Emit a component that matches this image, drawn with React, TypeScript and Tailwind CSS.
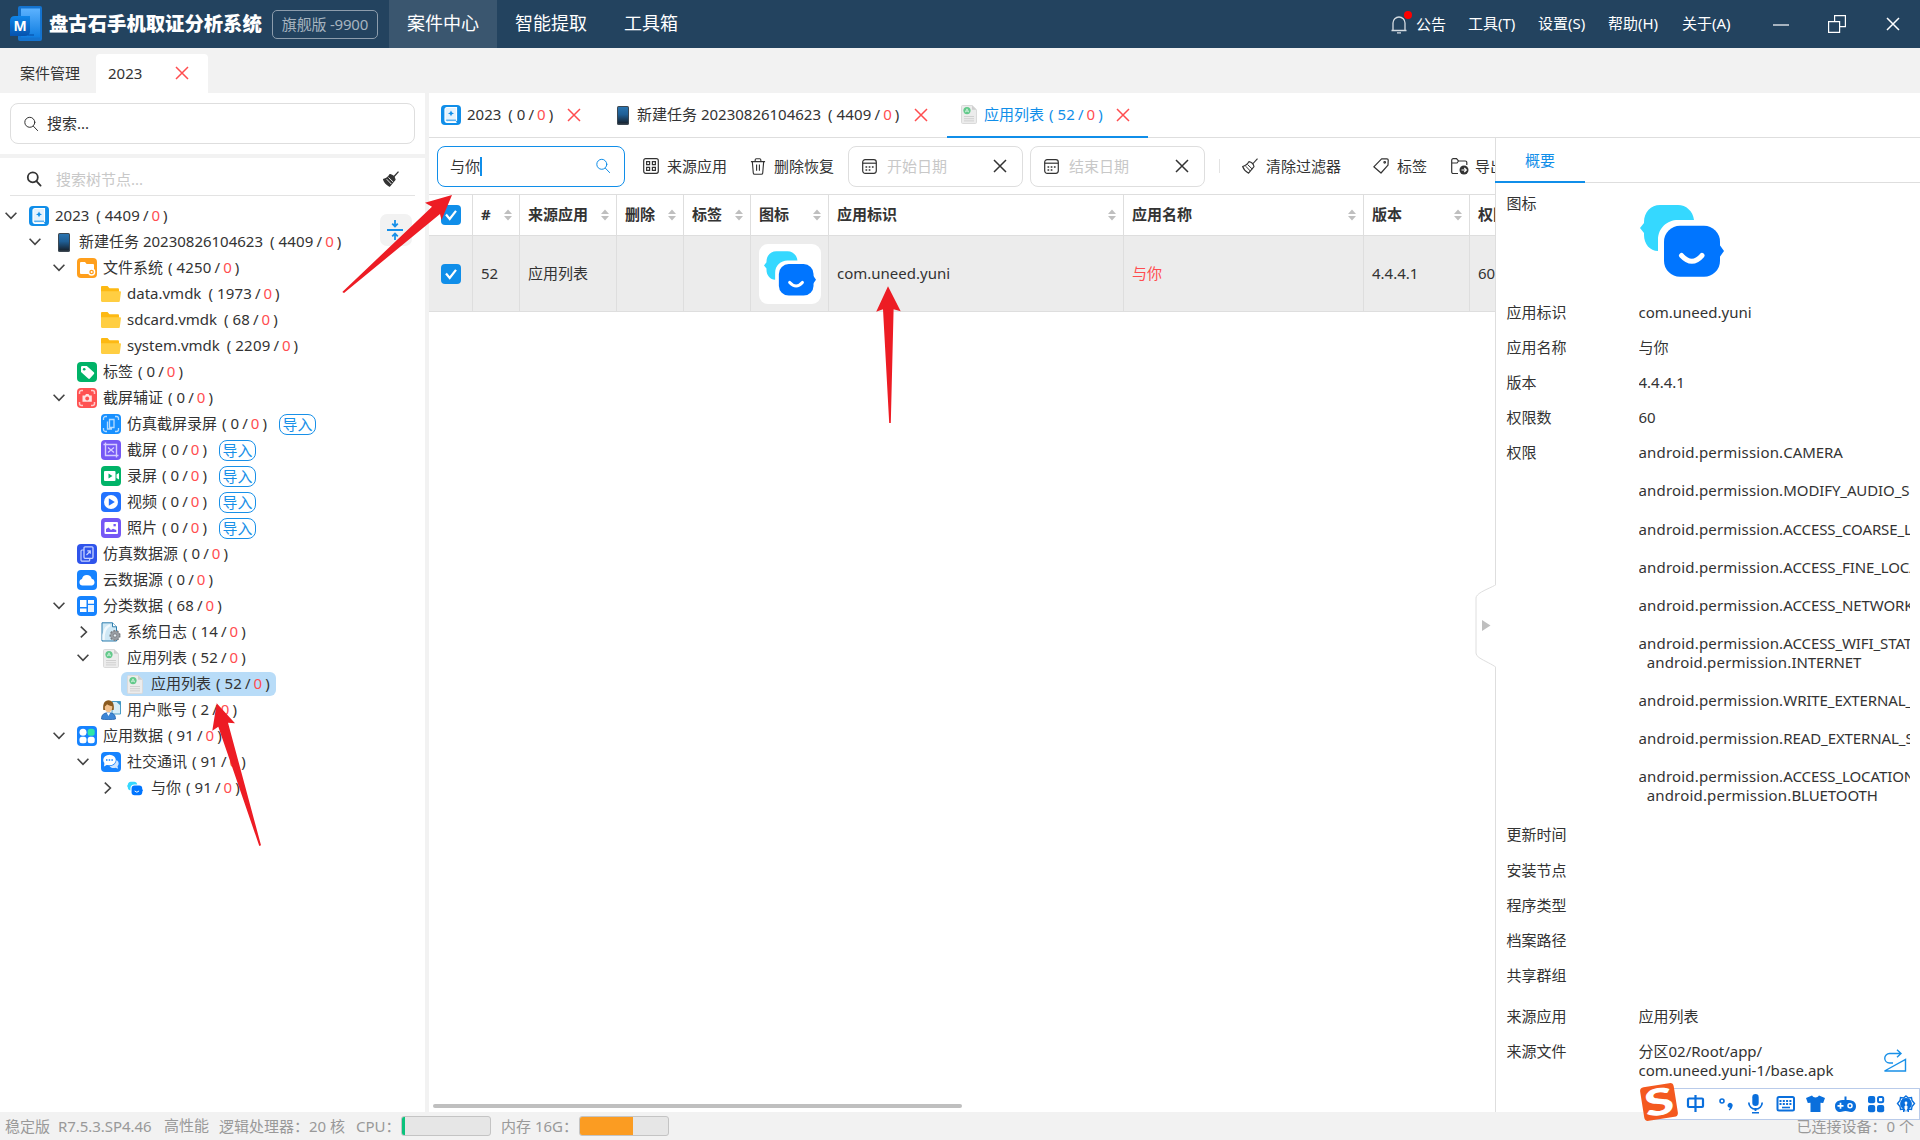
import React from "react";

type P = { className?: string };

/* ---------- shared drawings ---------- */

const Close = ({ className = "" }: P) => (
  <svg viewBox="0 0 14 14" className={`h-[14px] w-[14px] shrink-0 ${className}`} fill="none" stroke="currentColor" strokeWidth="1.5">
    <path d="M1 1l12 12M13 1L1 13" />
  </svg>
);

const Magnifier = ({ className = "" }: P) => (
  <svg viewBox="0 0 16 16" className={`h-4 w-4 shrink-0 ${className}`} fill="none" stroke="currentColor" strokeLinecap="round">
    <circle cx="6.8" cy="6.3" r="5" />
    <path d="M10.4 10.2l4.2 4.4" />
  </svg>
);

const YuniIcon = ({ className = "" }: P) => (
  <svg viewBox="0 0 84 72" className={`shrink-0 ${className}`}>
    <path d="M54 15C53 6 46 0 38 0H20C11 0 4 7 4 17v1l-4 5 4 5v2c0 9 6 16 14 16V35c0-12 9-20 20-20z" fill="#35d8ff" />
    <rect x="24" y="20.7" width="56" height="51" rx="16" fill="#0075ff" />
    <path d="M79 39l5 7-5 7z" fill="#0075ff" />
    <path d="M41.5 50.5Q52 62 62 50.5" fill="none" stroke="#fff" strokeWidth="5" strokeLinecap="round" />
  </svg>
);

const CaseIcon = ({ className = "h-5 w-5" }: P) => (
  <svg viewBox="0 0 20 20" className={`shrink-0 ${className}`}>
    <rect width="20" height="20" rx="4" fill="#108ee9" />
    <path d="M6 2.5h9.5v13H6.300a1.200 1.200 0 0 0 0 2M15.500 17.300H6a2 2 0 0 1-2-2V4.500a2 2 0 0 1 2-2" fill="#e4f2fd" stroke="#fff" strokeWidth="1.200" />
    <path d="M10 5.500l1 2 2 .9-2 .9-1 2-1-2-2-.9 2-.9z" fill="#108ee9" />
    <path d="M5.200 15.200h10" stroke="#108ee9" />
  </svg>
);

const PhoneIcon = ({ className = "" }: P) => (
  <svg viewBox="0 0 12 19" className={`h-[19px] w-3 shrink-0 ${className}`}>
    <defs>
      <linearGradient id="ph" x1="0" y1="0" x2="0" y2="1">
        <stop offset="0" stopColor="#2a74b0" />
        <stop offset=".45" stopColor="#1f5f96" />
        <stop offset="1" stopColor="#16222f" />
      </linearGradient>
    </defs>
    <rect width="12" height="19" rx="1.6" fill="#3b4752" />
    <rect x="1" y="1" width="10" height="16.5" rx=".8" fill="url(#ph)" />
  </svg>
);

const DocIcon = ({ className = "" }: P) => (
  <svg viewBox="0 0 16 19" className={`h-[19px] w-4 shrink-0 ${className}`}>
    <path d="M1.5.5h9.7l4.3 4.2v12.6a1.2 1.2 0 0 1-1.2 1.2H1.7a1.2 1.2 0 0 1-1.2-1.2V1.5a1 1 0 0 1 1-1z" fill="#ececec" stroke="#dadada" />
    <path d="M11 .5v4.3h4.5z" fill="#cfcfcf" />
    <circle cx="6" cy="5.6" r="3.6" fill="#62c98a" />
    <path d="M4.3 7.3L6 3.8l1.7 3.5M4.5 6.2h3" stroke="#d8f3e2" strokeWidth=".8" fill="none" />
    <path d="M3 11.5h10M3 13.7h10M3 15.9h10" stroke="#d0d0d0" />
  </svg>
);

const Tile = ({ color, children }: { color: string; children: React.ReactNode }) => (
  <svg viewBox="0 0 20 20" className="h-5 w-5 shrink-0">
    <rect width="20" height="20" rx="4" fill={color} />
    {children}
  </svg>
);

const icons: Record<string, React.ReactNode> = {
  case: <CaseIcon />,
  phone: <PhoneIcon className="ml-[5px] mr-[3px]" />,
  fs: (
    <Tile color="#ff9f1c">
      <path d="M3 5a1 1 0 0 1 1-1h4l1.6 2H16a1 1 0 0 1 1 1v8a1 1 0 0 1-1 1H4a1 1 0 0 1-1-1z" fill="#fff" />
      <circle cx="14.6" cy="14" r="3" fill="#ff9f1c" stroke="#fff" strokeWidth="1.4" />
      <circle cx="14.6" cy="14" r="1" fill="#fff" />
    </Tile>
  ),
  folder: (
    <svg viewBox="0 0 20 20" className="h-5 w-5 shrink-0">
      <path d="M0 3.2C0 2.5.5 2 1.2 2h5.3l2 2.2h8.3c.7 0 1.2.5 1.2 1.2V16H0z" fill="#fdb913" />
      <path d="M0 7.2h19.2c.6 0 .9.4.8.9l-1.2 8.8c-.1.6-.5 1.1-1.2 1.1H1.2C.5 18 0 17.500 0 16.800z" fill="#ffce42" />
    </svg>
  ),
  tag: (
    <Tile color="#00b368">
      <path d="M4 5.200A1.200 1.200 0 0 1 5.200 4h4.600l7 6.200c.6.5.6 1.200.1 1.700l-4 4.600c-.5.5-1.200.5-1.700 0L4 10z" fill="#fff" />
      <circle cx="7.200" cy="7.200" r="1.300" fill="#00b368" />
    </Tile>
  ),
  shot: (
    <Tile color="#ff5252">
      <path d="M2.500 6V4.500a2 2 0 0 1 2-2H6M14 2.500h1.500a2 2 0 0 1 2 2V6M17.500 14v1.500a2 2 0 0 1-2 2H14M6 17.500H4.500a2 2 0 0 1-2-2V14" fill="none" stroke="#ffc9c9" strokeWidth="1.500" />
      <path d="M5.500 7.500H8L9 6h2.500l1 1.500h2.300v6.300H5.500z" fill="#ffe3e3" />
      <circle cx="10.200" cy="10.500" r="1.900" fill="#ff5252" />
    </Tile>
  ),
  simshot: (
    <Tile color="#1890ff">
      <path d="M2.500 6V4.500a2 2 0 0 1 2-2H6M14 2.500h1.500a2 2 0 0 1 2 2V6M17.500 14v1.500a2 2 0 0 1-2 2H14M6 17.500H4.500a2 2 0 0 1-2-2V14" fill="none" stroke="#b5dcff" strokeWidth="1.300" />
      <path d="M8.500 5.500h4.500v8h-4.500zM6.500 7.500v7.500h4.500" fill="none" stroke="#b5dcff" strokeWidth="1.300" />
    </Tile>
  ),
  crop: (
    <Tile color="#7558f5">
      <path d="M4.500 2.500v13h13M2.500 4.500h13v13" fill="none" stroke="#d6ccff" strokeWidth="1.400" />
      <path d="M7 7.500l6 5M13 7.500l-6 5" stroke="#d6ccff" strokeWidth="1.300" />
    </Tile>
  ),
  rec: (
    <Tile color="#00b368">
      <rect x="3" y="5" width="11.500" height="10" rx="1" fill="#fff" />
      <path d="M15.500 8.500l2.500-1.500v6.500l-2.500-1.500z" fill="#fff" />
      <path d="M7.500 7.500l4 2.500-4 2.500z" fill="#00b368" />
    </Tile>
  ),
  video: (
    <Tile color="#2272ff">
      <circle cx="10" cy="10" r="7" fill="#fff" />
      <path d="M7.800 6.300l6 3.700-6 3.700z" fill="#2272ff" />
    </Tile>
  ),
  photo: (
    <Tile color="#7558f5">
      <rect x="3.500" y="4" width="13.500" height="12" rx="1" fill="#fff" />
      <path d="M5 14v-3l2.500-1.500L10 12l2-1.200 3.300 1.200v2z" fill="#7558f5" />
      <rect x="12.500" y="6" width="2.300" height="2.300" fill="#7558f5" />
    </Tile>
  ),
  sim: (
    <Tile color="#2f54eb">
      <rect x="7" y="2.800" width="9" height="11.500" rx="1" fill="none" stroke="#c6d2ff" strokeWidth="1.300" />
      <path d="M7 6H5a1 1 0 0 0-1 1v9a1.200 1.200 0 0 0 1.200 1.200h6.500a1 1 0 0 0 1-1v-2M9.500 11l3.800-4M10.300 6.800h3v3" fill="none" stroke="#c6d2ff" strokeWidth="1.200" />
    </Tile>
  ),
  cloud: (
    <Tile color="#1683ff">
      <path d="M5.500 15.500a3.300 3.300 0 0 1-.5-6.500 5 5 0 0 1 9.700-.3 3.500 3.500 0 0 1 .3 6.800z" fill="#fff" />
    </Tile>
  ),
  cat: (
    <Tile color="#1683ff">
      <path d="M3 4h6.500v7H3zM11 4h6v3.700h-6zM3 12.500h6.500V16H3z" fill="#fff" />
      <path d="M11 9h6v7h-6z" fill="#ecf5ff" />
    </Tile>
  ),
  syslog: (
    <svg viewBox="0 0 20 20" className="h-5 w-5 shrink-0">
      <path d="M1 .800h10.500l4 4V19H1z" fill="#cfe8f5" stroke="#2f7fae" />
      <path d="M11.500.800v4h4" fill="#fff" stroke="#2f7fae" />
      <path d="M2.500 18C2 10 5 5 9 3" stroke="#f1f9fd" strokeWidth="2.500" fill="none" />
      <circle cx="14" cy="13.500" r="4.800" fill="#9a9ea3" stroke="#7b8085" strokeWidth="1.500" strokeDasharray="2 1.400" />
      <circle cx="14" cy="13.500" r="1.700" fill="#e8f0f4" stroke="#6f7478" strokeWidth=".8" />
    </svg>
  ),
  doc: <DocIcon className="mx-0.5" />,
  user: (
    <svg viewBox="0 0 20 20" className="h-5 w-5 shrink-0">
      <path d="M11 1.500h8.500V14H11z" fill="#d9eef8" stroke="#4a9cc7" />
      <path d="M15 1.500l4.500 4V1.500z" fill="#3f94c2" />
      <path d="M.5 19c0-4.500 2.500-6.200 7-6.200s7 1.700 7 6.200c-3 1-11 1-14 0z" fill="#3d86d6" stroke="#2460a8" strokeWidth=".8" />
      <path d="M5.500 12.500h4L7.500 16z" fill="#fff" />
      <path d="M2.300 10C1.500 4 3.500.300 7.500.300S13.500 4 12.700 10z" fill="#8a5a1f" />
      <path d="M3.800 6.500c1-.5 1.700-1.200 2.200-2.200 1.500 1.200 3.300 1.700 5.300 1.900.2 3.400-1.300 6-3.800 6s-4-2.500-3.700-5.700z" fill="#f2c18d" />
    </svg>
  ),
  appdata: (
    <Tile color="#1683ff">
      <circle cx="6" cy="6.200" r="3.500" fill="#fff" />
      <rect x="10.700" y="2.700" width="7" height="7" rx="2.500" fill="#2fe6a8" />
      <rect x="2.500" y="10.700" width="7" height="6.600" rx="2.500" fill="#fff" />
      <rect x="10.700" y="10.700" width="7" height="6.600" rx="2.500" fill="#fff" />
    </Tile>
  ),
  social: (
    <Tile color="#1683ff">
      <path d="M15.500 8c2.500 1.500 2.800 4.500 1 6.300l.6 2.400-2.600-1c-2.500.8-5 .1-6-1.700 3.500.2 6.500-2 7-6z" fill="#cfe5ff" />
      <ellipse cx="8.500" cy="8" rx="6.300" ry="5.300" fill="#fff" />
      <path d="M3.500 10.500L3 14.500l3.500-2z" fill="#fff" />
      <path d="M5 8h7" stroke="#1683ff" strokeWidth="1.300" strokeDasharray="1.500 1.200" />
    </Tile>
  ),
  yuni: <YuniIcon className="mx-0.5 h-[15px] w-4" />,
};

/* ---------- small parts ---------- */

/* A title followed by its "(total/deleted)" counter */
const Label = ({ t, n }: { t: string; n: number }) => (
  <span className="inline-flex pb-0.5">
    <span>{t}</span>
    <span className={/\w$/.test(t) ? "ml-[7px] w-[8.500px]" : "ml-[5px] w-[8.500px]"}>(</span>
    <span className="tracking-[0.200px]">{n}</span>
    <span className="w-[11.500px] text-center">/</span>
    <span className="text-[#ff4d4f]">0</span>
    <span className="w-[7.500px] text-right">)</span>
  </span>
);

const Chevron = ({ open }: { open: boolean }) =>
  open ? (
    <svg viewBox="0 0 12 8" className="h-2 w-3" fill="none" stroke="#444" strokeWidth="1.600">
      <path d="M.6.800L6 6.400 11.400.800" />
    </svg>
  ) : (
    <svg viewBox="0 0 8 12" className="ml-[3px] h-3 w-2" fill="none" stroke="#444" strokeWidth="1.600">
      <path d="M.8.600L6.400 6 .8 11.400" />
    </svg>
  );

type Node = { l: number; i: string; t: string; n: number; o?: boolean; imp?: boolean; sel?: boolean };
const nodes: Node[] = [
  { l: 0, i: "case", t: "2023", n: 4409, o: true },
  { l: 1, i: "phone", t: "新建任务 20230826104623", n: 4409, o: true },
  { l: 2, i: "fs", t: "文件系统", n: 4250, o: true },
  { l: 3, i: "folder", t: "data.vmdk", n: 1973 },
  { l: 3, i: "folder", t: "sdcard.vmdk", n: 68 },
  { l: 3, i: "folder", t: "system.vmdk", n: 2209 },
  { l: 2, i: "tag", t: "标签", n: 0 },
  { l: 2, i: "shot", t: "截屏辅证", n: 0, o: true },
  { l: 3, i: "simshot", t: "仿真截屏录屏", n: 0, imp: true },
  { l: 3, i: "crop", t: "截屏", n: 0, imp: true },
  { l: 3, i: "rec", t: "录屏", n: 0, imp: true },
  { l: 3, i: "video", t: "视频", n: 0, imp: true },
  { l: 3, i: "photo", t: "照片", n: 0, imp: true },
  { l: 2, i: "sim", t: "仿真数据源", n: 0 },
  { l: 2, i: "cloud", t: "云数据源", n: 0 },
  { l: 2, i: "cat", t: "分类数据", n: 68, o: true },
  { l: 3, i: "syslog", t: "系统日志", n: 14, o: false },
  { l: 3, i: "doc", t: "应用列表", n: 52, o: true },
  { l: 4, i: "doc", t: "应用列表", n: 52, sel: true },
  { l: 3, i: "user", t: "用户账号", n: 2 },
  { l: 2, i: "appdata", t: "应用数据", n: 91, o: true },
  { l: 3, i: "social", t: "社交通讯", n: 91, o: true },
  { l: 4, i: "yuni", t: "与你", n: 91, o: false },
];

const TreeRow = ({ r }: { r: Node }) => (
  <div className="flex h-[26px] items-center" style={{ paddingLeft: 5 + r.l * 24 }}>
    <span className="flex w-5 shrink-0 items-center">{r.o !== undefined && <Chevron open={r.o} />}</span>
    <span className={`flex h-6 items-center gap-1.5 rounded-md pl-1 pr-[6px] ${r.sel ? "bg-[#b8dcf8]" : ""}`}>
      {icons[r.i]}
      <Label t={r.t} n={r.n} />
    </span>
    {r.imp && (
      <span className="ml-[6px] mt-px flex h-[21px] w-[37px] items-center justify-center rounded-[8px] border border-[#1890e8] pb-px text-[#1890e8]">导入</span>
    )}
  </div>
);

const Sort = () => (
  <svg viewBox="0 0 8 12" className="h-3 w-2 shrink-0" fill="#bfbfbf">
    <path d="M4 .500L8 5H0zM4 11.500L8 7H0z" />
  </svg>
);

const Check = () => (
  <svg viewBox="0 0 20 20" className="h-5 w-5">
    <rect width="20" height="20" rx="4" fill="#108ee9" />
    <path d="M5 9.500l3.700 4.500L15 5.800" fill="none" stroke="#fff" strokeWidth="2.200" />
  </svg>
);

const Calendar = () => (
  <svg viewBox="0 0 15 15" className="h-[15px] w-[15px] shrink-0" fill="none" stroke="#333" strokeWidth="1.200">
    <rect x=".7" y=".7" width="13.600" height="13.600" rx="2.500" />
    <path d="M.7 4.200h13.600" />
    <path d="M3.500 8h8.500M3.500 11h6" strokeDasharray="1.700 1.500" strokeWidth="1.600" />
  </svg>
);

const DateBox = ({ label }: { label: string }) => (
  <div className="flex h-[41px] w-[175px] shrink-0 items-center rounded-[8px] border border-[#dedede] px-[13px]">
    <Calendar />
    <span className="ml-[10px] text-[#c8c8c8]">{label}</span>
    <Close className="ml-auto mr-[2px] h-3 w-3" />
  </div>
);

const Broom = ({ filled, className = "" }: P & { filled?: boolean }) => (
  <svg viewBox="0 0 16 16" className={`h-4 w-4 shrink-0 ${className}`} fill={filled ? "#333" : "none"} stroke="#333" strokeWidth={filled ? 1.3 : 1.1} strokeLinejoin="round">
    <path d="M15.500.600L10.600 6" />
    <path d="M7 3.600c2.300.4 4.500 2.600 5 5L6.600 15.200C3.500 13.500 1.500 11 .6 8.500 3 8 5.300 6.600 7 3.600z" />
    <path d="M5.500 6.500l4.700 4.500M3.700 8.200L8.300 13" stroke={filled ? "#fff" : "#333"} strokeWidth={filled ? 0.9 : 1} />
  </svg>
);

const widths = ["w-[44px]", "w-[47px]", "w-[97px]", "w-[67px]", "w-[67px]", "w-[78px]", "w-[295px]", "w-[240px]", "w-[106px]", "w-[100px]"];
const heads = ["", "#", "来源应用", "删除", "标签", "图标", "应用标识", "应用名称", "版本", "权限数"];
const cells: React.ReactNode[] = [
  <Check />,
  "52",
  "应用列表",
  "",
  "",
  <span className="flex h-[60px] w-[62px] items-center justify-center rounded-[9px] bg-white">
    <YuniIcon className="h-[45px] w-[52px]" />
  </span>,
  "com.uneed.yuni",
  <span className="text-[#ff4d4f]">与你</span>,
  "4.4.4.1",
  "60",
];

const Field = ({ k, v }: { k: string; v?: React.ReactNode }) => (
  <div className="mb-4 flex leading-[19.070px]">
    <span className="w-[132px] shrink-0">{k}</span>
    <span className="min-h-[19px] w-[271px] overflow-hidden whitespace-pre">{v}</span>
  </div>
);

const permissions = [
  "CAMERA",
  "MODIFY_AUDIO_SETTINGS",
  "ACCESS_COARSE_LOCATION",
  "ACCESS_FINE_LOCATION",
  "ACCESS_NETWORK_STATE",
  "ACCESS_WIFI_STATE",
  "INTERNET",
  "WRITE_EXTERNAL_STORAGE",
  "READ_EXTERNAL_STORAGE",
  "ACCESS_LOCATION_EXTRA_COMMANDS",
  "BLUETOOTH",
];
const continued = ["INTERNET", "BLUETOOTH"];

const Permissions = () => (
  <>
    {permissions.map((p, k) => {
      const cont = continued.includes(p);
      return (
        <span key={p} className={`block tracking-[-0.100px] ${k && !cont ? "mt-[19.070px]" : ""}`}>
          <span className="tracking-[0.180px]">{(cont ? "  " : "") + "android.permission."}</span>
          {p}
        </span>
      );
    })}
  </>
);

/* ---------- page ---------- */

const Header = () => (
  <header className="flex h-12 shrink-0 items-center bg-[#23435f] text-white">
    <svg viewBox="0 0 34 36" className="ml-[9px] h-9 w-[34px] shrink-0">
      <defs>
        <linearGradient id="lg1" x1="0" y1="0" x2="0" y2="1">
          <stop offset="0" stopColor="#5cb2ff" />
          <stop offset="1" stopColor="#0f7de0" />
        </linearGradient>
        <linearGradient id="lg2" x1="0" y1="0" x2="0" y2="1">
          <stop offset="0" stopColor="#0f86ea" />
          <stop offset="1" stopColor="#0652ad" />
        </linearGradient>
      </defs>
      <rect x="9" y="0" width="24" height="35" rx="2" fill="#1473cf" />
      <rect x="12" y="2.500" width="19" height="29" fill="url(#lg1)" />
      <path d="M19 29h6" stroke="#0a5cb8" strokeWidth="1.500" />
      <path d="M1 15q0-5 5-5h15v15q0 5-5 5H1z" fill="url(#lg2)" />
      <text x="11" y="25" textAnchor="middle" fontSize="14" fontWeight="700" fill="#fff" fontFamily="Open Sans, sans-serif">M</text>
    </svg>
    <span className="ml-[6px] w-[214px] pb-px text-[19.350px] font-black leading-none">盘古石手机取证分析系统</span>
    <span className="ml-[9px] flex h-[29px] w-[106px] items-center justify-center rounded-[5px] border border-[#8d9dac] pb-px text-[15px] tracking-[-0.200px] text-[#a7b4bf]">旗舰版 -9900</span>
    <nav className="ml-[11px] flex h-full text-[18px]">
      <span className="flex w-[108px] items-center justify-center bg-[#3a566f] pb-0.5">案件中心</span>
      <span className="flex w-[108px] items-center justify-center pb-0.5">智能提取</span>
      <span className="flex w-[92px] items-center justify-center pb-0.5">工具箱</span>
    </nav>
    <div className="ml-auto flex h-full items-center text-[15px]">
      <span className="relative mr-[9px] flex">
        <svg viewBox="0 0 16 19" className="h-[19px] w-4" fill="none" stroke="#d5dce2" strokeWidth="1.300">
          <path d="M.5 15.500h15M2 15.500V8a6 6 0 0 1 12 0v7.500M6 17.800h4" />
        </svg>
        <i className="absolute -right-[5px] -top-[4px] h-2 w-2 rounded-full bg-[#ff0000]" />
      </span>
      <span className="w-[52px]">公告</span>
      <span className="w-[70px] pb-0.5">工具(T)</span>
      <span className="w-[70px] pb-0.5">设置(S)</span>
      <span className="w-[74px] pb-0.5">帮助(H)</span>
      <span className="w-[91px] pb-0.5">关于(A)</span>
      <svg viewBox="0 0 16 16" className="h-4 w-4" stroke="#fff" strokeWidth="1.200"><path d="M0 9h16" /></svg>
      <svg viewBox="0 0 18 18" className="ml-[39px] h-[18px] w-[18px]" fill="none" stroke="#fff" strokeWidth="1.200">
        <path d="M.6 6.600h11v10.800H.6zM6.600 6.600V.600h10.800v11h-5.800" />
      </svg>
      <Close className="ml-[40px] mr-[20px] h-4 w-4" />
    </div>
  </header>
);

const LeftPanel = () => (
  <aside className="relative flex w-[425px] shrink-0 flex-col bg-white">
    <div className="mx-[10px] mt-[10px] flex h-[41px] items-center rounded-[8px] border border-[#dedede]">
      <Magnifier className="ml-3" />
      <span className="ml-2 pb-px">搜索...</span>
    </div>
    <div className="mt-[10px] h-1 bg-[#f2f2f2]" />
    <div className="mx-[10px] flex h-[38px] items-center border-b border-[#e3e3e3] pt-[5px]">
      <Magnifier className="ml-[16px] [stroke-width:1.800]" />
      <span className="ml-[14px] text-[#c8c8c8]">搜索树节点...</span>
      <Broom filled className="ml-auto mr-[16px]" />
    </div>
    <div className="mt-[7px]">
      {nodes.map((r, k) => (
        <TreeRow key={k} r={r} />
      ))}
    </div>
    <div className="absolute left-[380px] top-[121px] flex h-[32px] w-[32px] items-center justify-center rounded-[7px] bg-[#f2f2f2] pr-0.5">
      <svg viewBox="0 0 16 20" className="h-5 w-4" fill="none" stroke="#1890e8" strokeWidth="1.800">
        <path d="M0 10h16M8 0v6M5.200 3.700L8 6.500l2.800-2.800M8 20v-6M5.200 16.300L8 13.500l2.800 2.800" />
      </svg>
    </div>
  </aside>
);

const MainTabs = () => (
  <div className="flex h-[45px] shrink-0 border-b border-[#dedede]">
    <div className="ml-[12px] flex w-[176px] items-center gap-[6px]">
      <CaseIcon />
      <Label t="2023" n={0} />
      <Close className="ml-auto mr-[36px] text-[#ff4d4f]" />
    </div>
    <div className="flex w-[330px] items-center gap-[8px]">
      <PhoneIcon />
      <Label t="新建任务 20230826104623" n={4409} />
      <Close className="ml-auto mr-[19px] text-[#ff4d4f]" />
    </div>
    <div className="flex h-[45px] w-[201px] items-center gap-[7px] border-b-2 border-[#108ee9] pl-[14px] text-[#108ee9]">
      <DocIcon />
      <Label t="应用列表" n={52} />
      <Close className="ml-auto mr-[18px] text-[#ff4d4f]" />
    </div>
  </div>
);

const Toolbar = () => (
  <div className="flex h-[57px] shrink-0 items-center overflow-hidden border-b border-[#dedede]">
    <div className="ml-[8px] flex h-[41px] w-[188px] shrink-0 items-center rounded-[8px] border border-[#108ee9] pl-[12px] pr-[13px]">
      <span>与你</span>
      <i className="h-[19px] w-[1.500px] bg-[#108ee9]" />
      <Magnifier className="ml-auto text-[#108ee9]" />
    </div>
    <svg viewBox="0 0 16 16" className="ml-[18px] h-4 w-4 shrink-0" fill="none" stroke="#333" strokeWidth="1.200">
      <rect x=".7" y=".7" width="14.600" height="14.600" rx="2" />
      <path d="M3.600 3.600h3v3h-3zM9.400 3.600h3v3h-3zM3.600 9.400h3v3h-3zM9.400 9.400h3v3h-3z" />
    </svg>
    <span className="ml-[8px] w-[83px] shrink-0">来源应用</span>
    <svg viewBox="0 0 16 18" className="h-[17px] w-4 shrink-0" fill="none" stroke="#333" strokeWidth="1.200">
      <path d="M.5 3.800h15M5 3.800V2a1.200 1.200 0 0 1 1.200-1.200h3.600A1.200 1.200 0 0 1 11 2v1.800M2 3.800l1 12a1.500 1.500 0 0 0 1.500 1.400h7a1.500 1.500 0 0 0 1.500-1.400l1-12M6.500 7v6.500M9.500 7v6.500" />
    </svg>
    <span className="ml-[8px] w-[74px] shrink-0">删除恢复</span>
    <DateBox label="开始日期" />
    <span className="w-[7px] shrink-0" />
    <DateBox label="结束日期" />
    <i className="ml-[14px] h-[14px] w-px shrink-0 bg-[#e3e3e3]" />
    <Broom className="ml-[22px]" />
    <span className="ml-[8px] w-[107px] shrink-0">清除过滤器</span>
    <svg viewBox="0 0 16 16" className="h-4 w-4 shrink-0" fill="none" stroke="#333" strokeWidth="1.200" strokeLinejoin="round">
      <path d="M8.600.900L14 .800q1.200 0 1.200 1.200L15 7.200 8 15 .8 8.800z" />
      <circle cx="11.700" cy="4.300" r=".8" />
    </svg>
    <span className="ml-[8px] w-[54px] shrink-0">标签</span>
    <svg viewBox="0 0 18 17" className="h-[17px] w-[18px] shrink-0" fill="none" stroke="#333" strokeWidth="1.200">
      <path d="M7 15.500H2.200A1.500 1.500 0 0 1 .7 14V2.200A1.500 1.500 0 0 1 2.200.700h3.300L7.500 3h6.800a1.500 1.500 0 0 1 1.500 1.500V7M.7 5H6l1.500-2" />
      <circle cx="13" cy="12" r="4.500" fill="#333" stroke="none" />
      <path d="M10.500 12h4.500M13.300 10l2 2-2 2" stroke="#fff" />
    </svg>
    <span className="ml-[6px] shrink-0">导出</span>
  </div>
);

const Table = () => (
  <div className="flex min-h-0 flex-1 flex-col overflow-hidden">
    <div className="flex h-[41px] shrink-0 border-b border-[#dedede] font-bold">
      {heads.map((h, k) => (
        <div key={k} className={`flex shrink-0 items-center border-r border-[#dedede] pr-[7px] ${k ? "pl-2" : "pl-[12px]"} ${widths[k]}`}>
          {k ? (
            <>
              <span className="pb-0.5">{h}</span>
              <span className="ml-auto flex">
                <Sort />
              </span>
            </>
          ) : (
            <Check />
          )}
        </div>
      ))}
    </div>
    <div className="flex h-[76px] shrink-0 border-b border-[#dedede] bg-[#ececec]">
      {cells.map((c, k) => (
        <div key={k} className={`flex shrink-0 items-center border-r border-[#dedede] ${k ? "pl-2" : "pl-[12px]"} ${k === 0 || k === 5 ? "" : "pb-0.5"} ${widths[k]}`}>
          {c}
        </div>
      ))}
    </div>
    <div className="mb-1 ml-1 mt-auto h-1 w-[529px] rounded-full bg-[#bfbfbf]" />
  </div>
);

const Detail = () => (
  <section className="relative w-[425px] shrink-0 border-l border-[#dedede] bg-white">
    <div className="flex h-[45px] border-b border-[#dedede]">
      <span className="-ml-px flex h-[45px] w-[90px] items-center justify-center border-b-2 border-[#108ee9] text-[#108ee9]">概要</span>
    </div>
    <div className="pl-[10.500px] pt-[12px]">
      <div className="flex h-[108px] leading-[19px]">
        <span className="w-[133.500px] -translate-y-px">图标</span>
        <YuniIcon className="mt-[10px] h-[72px] w-[84px]" />
      </div>
      <Field k="应用标识" v="com.uneed.yuni" />
      <Field k="应用名称" v="与你" />
      <Field k="版本" v="4.4.4.1" />
      <Field k="权限数" v="60" />
      <Field k="权限" v={<Permissions />} />
      <div className="mt-[20px]">
        <Field k="更新时间" />
        <Field k="安装节点" />
        <Field k="程序类型" />
        <Field k="档案路径" />
        <Field k="共享群组" />
      </div>
      <div className="mt-[22px]">
        <Field k="来源应用" v="应用列表" />
        <Field k="来源文件" v={"分区02/Root/app/\ncom.uneed.yuni-1/base.apk"} />
      </div>
    </div>
    <svg viewBox="0 0 24 24" className="absolute right-[13px] top-[911px] h-6 w-6" fill="none" stroke="#1890e8" strokeWidth="1.400">
      <path d="M17 4.500H6.500a4.500 4.500 0 0 0 0 9.500H10M14 .800l4 3.700-4 3.700M1.500 22L22.500 10.500V22z" />
    </svg>
    <svg viewBox="0 0 22 84" className="absolute -left-[21px] top-[446px] h-[84px] w-[22px]" fill="#fff" stroke="#dedede">
      <path d="M21 .500C18 3 6 7 2.500 11Q1 12.500 1 14v55q0 2.500 3 4.500c5 3.500 14 7 17 10" />
      <path d="M7 36l8.500 5.500L7 47z" fill="#bfbfbf" stroke="none" />
    </svg>
  </section>
);

const StatusBar = () => (
  <footer className="flex h-7 shrink-0 items-center bg-[#f2f2f2] text-[#999]">
    <span className="ml-[5px] w-[53px]">稳定版</span>
    <span className="w-[106px] tracking-[-0.050px]">R7.5.3.SP4.46</span>
    <span className="w-[55px] -translate-y-px">高性能</span>
    <span className="w-[90px]">逻辑处理器：</span>
    <span className="w-[47px]">20 核</span>
    <span className="w-[45px]">CPU：</span>
    <span className="flex h-5 w-[90px] overflow-hidden rounded-[3px] border border-[#c4c4c4] bg-[#e6e6e6]">
      <i className="w-[3px] bg-[#0ac27c]" />
    </span>
    <span className="ml-[10px] w-[78px]">内存 16G：</span>
    <span className="flex h-5 w-[90px] overflow-hidden rounded-[3px] border border-[#c4c4c4] bg-[#e6e6e6]">
      <i className="w-[53px] bg-[#fb9c22]" />
    </span>
    <span className="ml-auto mr-[6px]">已连接设备：0 个</span>
  </footer>
);

/* Floating input-method toolbar */
const ImeBar = () => (
  <div className="absolute left-[1646px] top-[1088px] flex h-8 w-[274px] items-center border border-[#b9cbea] bg-white pl-[38px] text-[#0a6fdc]">
    <svg viewBox="0 0 40 38" className="absolute -left-[8px] -top-[6px] h-[38px] w-10">
      <g transform="rotate(-9 20 19)">
        <rect x="3" y="2" width="34" height="34" rx="4" fill="#f4591f" />
        <text x="20" y="32" textAnchor="middle" fontSize="37" fontWeight="900" fill="#fff" fontFamily="Lato, sans-serif" transform="translate(20 0) scale(1.450 1) translate(-20 0)">S</text>
      </g>
    </svg>
    <svg viewBox="0 0 234 24" className="h-6 w-[234px] shrink-0" fill="currentColor">
      <rect x="3" y="6.500" width="15" height="8.500" rx="1" fill="none" stroke="currentColor" strokeWidth="2.200" />
      <path d="M9.400 3h2.200v17H9.400z" />
      <circle cx="37" cy="9" r="2" fill="none" stroke="currentColor" strokeWidth="1.600" />
      <path d="M42.500 13.500a2.600 2.600 0 1 1 4.800 1.300c-.5 1.800-1.500 3-3 3.700l-.6-1c.7-.4 1.100-1 1.300-1.800-1.400-.1-2.500-1-2.500-2.200z" />
      <rect x="67.300" y="2" width="6.400" height="12" rx="3.200" />
      <path d="M63.800 10.500a6.700 6.700 0 0 0 13.400 0" fill="none" stroke="currentColor" strokeWidth="1.700" />
      <path d="M69.600 16h1.800v3h-1.800zM67 20h7v1.500h-7z" />
      <rect x="92.500" y="5" width="16.500" height="13.500" rx="1.500" fill="none" stroke="currentColor" strokeWidth="2" />
      <path d="M94.500 9h13M94.500 12h13" stroke="currentColor" strokeWidth="1.800" strokeDasharray="2 1.300" />
      <path d="M97 15.500h8" stroke="currentColor" strokeWidth="1.600" />
      <path d="M127 3.500c1.500 2.500 5.500 2.500 7 0L140 6l-1.800 5-2.700-.3V20h-10v-9.300l-2.700.3-1.800-5z" />
      <path d="M159.500 8V4.500h2V8c6 0 9.500 1.500 9.500 6.200 0 3.800-2.500 5.800-5 5.800-2.500 0-3-1-5.500-1s-3 1-5.500 1-5-2-5-5.800C150 9.500 153.500 8 159.500 8z" />
      <path d="M152.500 13.800h6M155.500 10.800v6" stroke="#fff" strokeWidth="1.700" />
      <circle cx="165" cy="13.800" r="2" fill="none" stroke="#fff" strokeWidth="1.500" />
      <rect x="183" y="4" width="7.200" height="7.200" rx="2" />
      <rect x="193" y="5" width="5.200" height="5.200" rx="1.500" fill="none" stroke="currentColor" strokeWidth="2" />
      <rect x="183" y="13" width="7.200" height="7.200" rx="2" />
      <rect x="192" y="13" width="7.200" height="7.200" rx="2" />
      <path d="M221 4l2.500 2 3-.5.5 3 2.500 3-2.500 3-.5 3-3-.5-2.500 2-2.500-2-3 .5-.5-3-2.500-3 2.500-3 .5-3 3 .5z" fill="none" stroke="currentColor" strokeWidth="1.400" />
      <path d="M221 6a5.800 5.800 0 0 1 3 10.800V20h-1.500v-6h-3v6H218v-3.200A5.800 5.800 0 0 1 221 6z" />
      <circle cx="221" cy="11" r="1.400" fill="#fff" />
      <path d="M221 12v9" stroke="#fff" strokeWidth="1.300" />
    </svg>
  </div>
);

/* Hand-placed annotation arrows */
const Arrows = () => (
  <svg viewBox="0 0 1920 1140" className="pointer-events-none absolute inset-0 h-full w-full" fill="#ed1c24">
    <path d="M452 195l-27 7.700 7 4L342.300 292l1.700 1 96-79 1.500 6z" />
    <path d="M888 286.300l-11.800 25.400 6.800-2.400 6.200 113.700h1.600l2.800-113.700 7.100 2z" />
    <path d="M216.700 703.300l-4.400 27.400 6-4L259.300 846l1.700-.7L228 722.700l7 .6z" />
  </svg>
);

export default function App() {
  return (
    <div className="relative flex h-[1140px] w-[1920px] flex-col overflow-hidden whitespace-nowrap bg-[#f2f2f2] font-['Noto_Sans','Noto_Sans_CJK_SC',sans-serif] text-[15px] leading-5 text-[#333]">
      <Header />
      <div className="flex h-[45px] shrink-0 pt-[6px]">
        <span className="flex w-24 items-center pb-0.5 pl-5">案件管理</span>
        <span className="flex w-[112px] items-center rounded-t-[4px] bg-white pb-0.5 pl-3">
          2023
          <Close className="ml-auto mr-[19px] text-[#ff4d4f]" />
        </span>
      </div>
      <div className="flex h-[1019px] shrink-0">
        <LeftPanel />
        <main className="ml-1 flex w-[1491px] flex-col bg-white">
          <MainTabs />
          <div className="flex min-h-0 flex-1">
            <div className="flex w-[1066px] shrink-0 flex-col overflow-hidden">
              <Toolbar />
              <Table />
            </div>
            <Detail />
          </div>
        </main>
      </div>
      <StatusBar />
      <ImeBar />
      <Arrows />
    </div>
  );
}
